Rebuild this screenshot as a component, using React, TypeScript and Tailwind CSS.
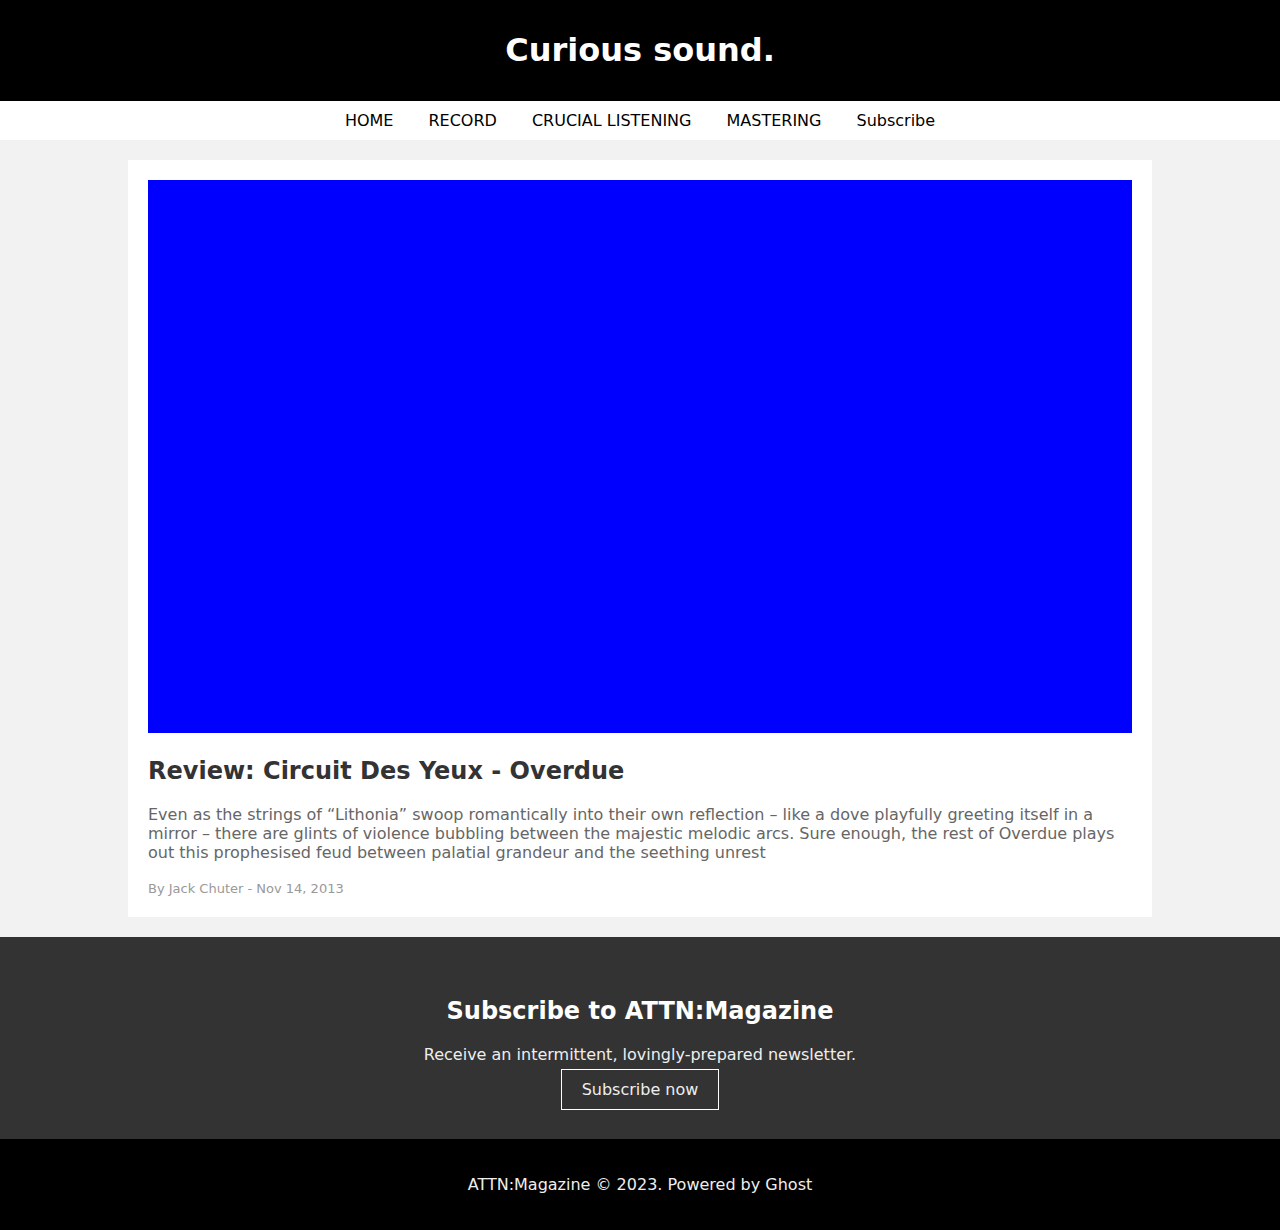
import React from 'react';

const NAV = ['HOME', 'RECORD', 'CRUCIAL LISTENING', 'MASTERING', 'Subscribe'];

const App: React.FC = () => {
  return (
    <div className="min-h-[1230px] bg-[#f2f2f2] font-['DejaVu_Sans',sans-serif] flex flex-col">
      {/* Site header */}
      <header className="bg-black h-[101px] flex items-center justify-center pb-[2px]">
        <h1 className="text-white text-[32px] font-bold leading-none">Curious sound.</h1>
      </header>

      <nav className="bg-white h-[39px] flex items-center justify-center gap-[35px] text-[16px] text-black">
        {NAV.map((item) => (
          <a key={item} href="#" className="leading-none">{item}</a>
        ))}
      </nav>

      {/* Post card */}
      <main className="py-5">
        <article className="w-[1024px] mx-auto bg-white p-5">
          <div className="w-full h-[553px] bg-[#0000ff]"></div>
          <h2 className="mt-[26px] text-[24px] font-bold text-[#333] leading-[24px]">
            Review: Circuit Des Yeux - Overdue
          </h2>
          <p className="mt-[22px] text-[16px] text-[#666] leading-[19px]">
            Even as the strings of “Lithonia” swoop romantically into their own reflection – like a dove playfully greeting itself in a mirror – there are glints of violence bubbling between the majestic melodic arcs. Sure enough, the rest of Overdue plays out this prophesised feud between palatial grandeur and the seething unrest
          </p>
          <div className="mt-[19px] text-[13px] text-[#999] leading-[16px]">
            By Jack Chuter - Nov 14, 2013
          </div>
        </article>
      </main>

      {/* Newsletter */}
      <section className="bg-[#333] h-[202px] flex flex-col items-center pt-[60px] text-white">
        <h3 className="text-[24px] font-bold leading-[28px]">Subscribe to ATTN:Magazine</h3>
        <p className="mt-[20px] text-[16px] leading-[19px] text-[#eee]">
          Receive an intermittent, lovingly-prepared newsletter.
        </p>
        <button className="mt-[5px] w-[158px] h-[41px] border border-white text-[16px] text-[#eee]">
          Subscribe now
        </button>
      </section>

      <footer className="bg-black h-[91px] flex items-center justify-center text-[16px] text-[#eee]">
        ATTN:Magazine © 2023. Powered by Ghost
      </footer>
    </div>
  );
};

export default App;
